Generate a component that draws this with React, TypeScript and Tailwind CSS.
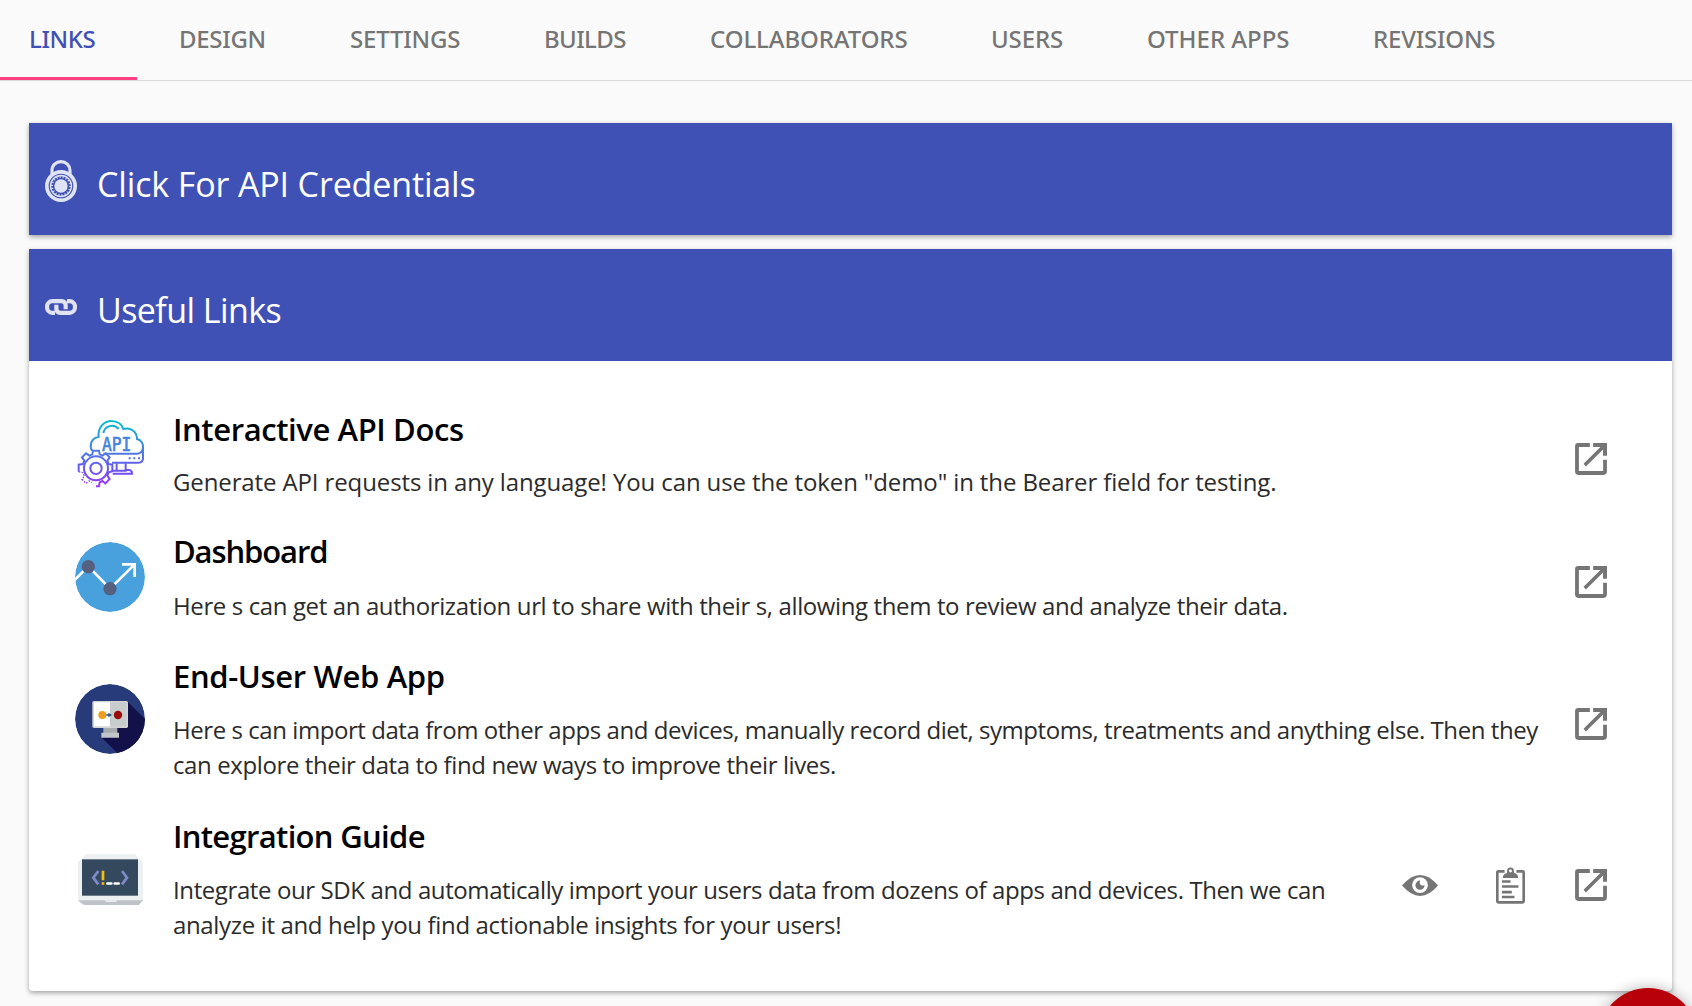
import React from "react";

const tabs = [
  { label: "LINKS", cls: "w-[137px] pl-[29px] text-[#3f51b5] border-b-3 border-[#ff4081] pt-[3px] tracking-[-0.4px]" },
  { label: "DESIGN", cls: "w-[171px] tracking-[-0.3px]" },
  { label: "SETTINGS", cls: "w-[194px] tracking-[-0.2px]" },
  { label: "BUILDS", cls: "w-[166px] tracking-[-0.6px]" },
  { label: "COLLABORATORS", cls: "w-[281px] tracking-[-0.1px]" },
  { label: "USERS", cls: "w-[156px] tracking-[-0.1px]" },
  { label: "OTHER APPS", cls: "w-[226px]" },
  { label: "REVISIONS", cls: "w-[206px] tracking-[-0.2px]" },
];

function LockIcon() {
  return (
    <svg viewBox="0 0 96 126" className="h-[42px] w-8" fill="none" stroke="#e0e3f3">
      <path d="M21 45V31A27 26 0 0 1 75 31V45" strokeWidth="9.500" />
      <circle cx="48" cy="78" r="42.500" strokeWidth="11" />
      <circle cx="48" cy="78" r="31.500" strokeWidth="4" />
      <circle cx="48" cy="78" r="27" strokeWidth="6" strokeDasharray="3 6.4" />
      <circle cx="48" cy="78" r="20" fill="#e0e3f3" stroke="none" />
    </svg>
  );
}

function ChainIcon() {
  return (
    <svg viewBox="0 0 96 48" className="h-4 w-8" fill="none" stroke="#e0e3f3" strokeWidth="12.500">
      <path d="M30 41.500H22A16 17.500 0 0 1 22 6.500H49Q62 7 62 19V31" />
      <path d="M66 6.500H74A16 17.500 0 0 1 74 41.500H47Q34 41 34 29V17" />
    </svg>
  );
}

function ApiIcon() {
  return (
    <svg viewBox="27 27 210 210" className="size-[70px]" fill="none" stroke="url(#apiGrad)" strokeWidth="6">
      <defs>
        <linearGradient id="apiGrad" gradientUnits="userSpaceOnUse" x1="0" y1="30" x2="0" y2="230">
          <stop offset="0" stopColor="#00c0d0" />
          <stop offset="0.450" stopColor="#4a7fe0" />
          <stop offset="0.750" stopColor="#6a55f0" />
          <stop offset="1" stopColor="#a035f5" />
        </linearGradient>
      </defs>
      <path d="M78 122C70 108 74 84 98 81C94 52 115 33 136 33C155 33 168 44 172 57C194 50 213 66 213 87C226 90 232 102 231 113V146Q230 158 218 158H138" />
      <path d="M112 131H214Q229 130 231 113M112 69C116 48 143 39 158 57" />
      <path d="M152 160V182H138M179 160V180H190Q198 181 198 191H140M152 182H182" />
      <path d="M188 145h6M202 145h6M216 145h6" />
      <circle cx="90" cy="175" r="17" />
      <circle cx="90" cy="175" r="36" />
      <path d="M38 185V164L51 162L55 152L48 142L60 130L70 137L79 133L81 122H99L101 133L110 137L119 130L131 142L124 152L128 162L139 164V184L128 187L124 197L131 207L118 220L109 213L101 217L99 229H90" />
      <path d="M38 185L51 188L55 198L48 208L60 220L69 213L78 217" strokeWidth="4" strokeDasharray="5 4" />
      <text x="108" y="122" textLength="88" lengthAdjust="spacingAndGlyphs" fill="#4583dc" stroke="#4583dc" strokeWidth="2" className="font-['DejaVu_Sans_Mono',monospace] text-[60px]">API</text>
    </svg>
  );
}

function DashboardIcon() {
  return (
    <svg viewBox="27 36 210 210" className="size-[70px]">
      <clipPath id="dashClip"><circle cx="132" cy="141" r="105" /></clipPath>
      <g clipPath="url(#dashClip)">
        <circle cx="132" cy="141" r="105" fill="#48a0dc" />
        <path d="M24 152L67 109L132 176L206 103M168 103H206V141" fill="none" stroke="#fff" strokeWidth="8" />
        <circle cx="67" cy="110" r="20" fill="#556080" />
        <circle cx="132" cy="176" r="20" fill="#556080" />
      </g>
    </svg>
  );
}

function WebAppIcon() {
  return (
    <svg viewBox="27 42 210 210" className="size-[70px]">
      <clipPath id="webClip"><circle cx="132" cy="147" r="105" /></clipPath>
      <g clipPath="url(#webClip)">
        <circle cx="132" cy="147" r="105" fill="#273b7a" />
        <path d="M185 95L260 170V260H165L106 202L150 172Z" fill="#121149" />
        <path d="M112 170H154V190H112Z" fill="#a9acae" />
        <path d="M106 188H159V203H106Z" fill="#c3c6c8" />
        <rect x="79" y="93" width="107" height="81" rx="5" fill="#d3d5d6" />
        <path d="M84 97H132V169H84Z" fill="#fff" />
        <path d="M132 97H181V169H132Z" fill="#c9cccd" />
        <path d="M110 135H134" stroke="#2d5788" strokeWidth="5" />
        <path d="M127 128L138 135L127 142Z" fill="#2d5788" />
        <circle cx="109" cy="135" r="12" fill="#ee9d22" />
        <circle cx="156" cy="135" r="12.500" fill="#970b0b" />
      </g>
    </svg>
  );
}

function GuideIcon() {
  return (
    <svg viewBox="27 12 210 210" className="size-[70px]" fill="none">
      <path d="M60 43H207L231 67V183H36V67Z" fill="#ecf0f1" />
      <path d="M36 181H231L218 195H62Q52 195 48 191Z" fill="#bdc3c7" />
      <path d="M116 181H154Q152 186 147 186H123Q118 186 116 181Z" fill="#ecf0f1" />
      <rect x="48" y="58" width="168" height="109" fill="#35495e" />
      <path d="M97 93L82 113L97 133M168 93L183 113L168 133" stroke="#7f8bc9" strokeWidth="8" />
      <path d="M111 92V121M111 127V134" stroke="#f3c010" strokeWidth="8" />
      <path d="M124 130.500H136M146 130.500H158" stroke="#fff" strokeWidth="8" strokeLinecap="round" />
    </svg>
  );
}

function OpenIcon() {
  return (
    <svg viewBox="0 0 97 97" className="size-8" fill="none" stroke="#757575">
      <path d="M45 6H10Q6 6 6 10V86Q6 91 10 91H86Q91 91 91 86V51" strokeWidth="11.500" />
      <path d="M55 0H97V39H85V20L33 71L26 63L77 12H55Z" fill="#757575" stroke="none" />
    </svg>
  );
}

function EyeIcon() {
  return (
    <svg viewBox="0 0 110 64" className="h-[21px] w-9">
      <path d="M0 32Q28 0 55 0Q83 0 110 32Q83 64 55 64Q28 64 0 32Z" fill="#757575" />
      <circle cx="55" cy="31" r="24" fill="#fff" />
      <path d="M55 17A14 14 0 1 0 69 31Q60 34 56 29Q53 24 55 17Z" fill="#757575" />
    </svg>
  );
}

function ClipboardIcon() {
  return (
    <svg viewBox="0 0 88 110" className="h-[37px] w-[29px]" fill="none" stroke="#757575">
      <path d="M26 12H7Q4 12 4 15V103Q4 106 7 106H81Q84 106 84 103V15Q84 12 81 12H62" strokeWidth="8" />
      <path d="M21 32Q21 20 32 18Q34 17 34 10A10 10 0 0 1 54 10Q54 17 57 18Q67 20 67 32Z" fill="#757575" stroke="none" />
      <circle cx="44" cy="11" r="4.500" fill="#fff" stroke="none" />
      <path d="M18 43H44M18 58H68M18 75H48M18 90H56" strokeWidth="8" />
    </svg>
  );
}

const links = [
  {
    title: "Interactive API Docs", rowCls: "mb-8", titleCls: "tracking-[-0.4px] mb-[15px]", icon: <ApiIcon />,
    lines: [{ text: 'Generate API requests in any language! You can use the token "demo" in the Bearer field for testing.', cls: "tracking-[-0.117px]" }],
  },
  {
    title: "Dashboard", rowCls: "mb-[33px]", titleCls: "tracking-[-1.1px] mb-[17px]", icon: <DashboardIcon />,
    lines: [{ text: "Here s can get an authorization url to share with their s, allowing them to review and analyze their data.", cls: "tracking-[-0.38px]" }],
  },
  {
    title: "End-User Web App", rowCls: "mb-[34px]", titleCls: "tracking-[-0.35px] mb-4", icon: <WebAppIcon />,
    lines: [
      { text: "Here s can import data from other apps and devices, manually record diet, symptoms, treatments and anything else. Then they", cls: "tracking-[-0.44px]" },
      { text: "can explore their data to find new ways to improve their lives.", cls: "tracking-[-0.39px]" },
    ],
  },
  {
    title: "Integration Guide", rowCls: "", titleCls: "tracking-[-0.68px] mb-4", icon: <GuideIcon />, extra: true,
    lines: [
      { text: "Integrate our SDK and automatically import your users data from dozens of apps and devices. Then we can", cls: "tracking-[-0.395px]" },
      { text: "analyze it and help you find actionable insights for your users!", cls: "tracking-[-0.345px]" },
    ],
  },
];

function CardHeader({ icon, title, cls }: { icon: React.ReactNode; title: string; cls: string }) {
  return (
    <header className="flex h-28 items-center gap-5 bg-[#3f51b5] pt-1 pl-4">
      {icon}
      <h2 className={"pt-[6px] text-[34px] leading-10 text-white " + cls}>{title}</h2>
    </header>
  );
}

export default function App() {
  return (
    <div className="relative h-[1006px] overflow-hidden bg-[#fafafa] font-['Open_Sans',sans-serif]">
      <nav className="flex h-[81px] border-b border-[#dadada] font-['Noto_Sans',sans-serif] text-2xl font-medium text-[#757575]">
        {tabs.map((t, i) => (
          <button key={t.label} className={"flex h-20 items-center text-left whitespace-nowrap " + (i ? "pl-[42px] " : "") + t.cls}>
            <span className="pb-[2px]">{t.label}</span>
          </button>
        ))}
      </nav>
      <main className="mt-[42px] mr-5 ml-[29px] flex flex-col gap-[14px]">
        <section className="shadow-[0_2px_5px_rgba(0,0,0,0.35)]">
          <CardHeader icon={<LockIcon />} title="Click For API Credentials" cls="tracking-[-0.14px]" />
        </section>
        <section className="h-[742px] rounded-b bg-white shadow-[0_2px_5px_rgba(0,0,0,0.35)]">
          <CardHeader icon={<ChainIcon />} title="Useful Links" cls="tracking-[-0.57px]" />
          <ul className="flex flex-col pt-12 pr-[65px] pl-[46px]">
            {links.map((l) => (
              <li key={l.title} className={"flex items-center " + l.rowCls}>
                {l.icon}
                <div className="ml-7 flex-1">
                  <h3 className={"text-[31px] leading-10 font-semibold text-black " + l.titleCls}>{l.title}</h3>
                  <p className="text-2xl leading-[35px] whitespace-nowrap text-[#2b2b2b]">
                    {l.lines.map((s) => (
                      <span key={s.text} className={"block " + s.cls}>{s.text}</span>
                    ))}
                  </p>
                </div>
                <div className={l.extra ? "flex items-center pt-[11px]" : "flex items-center pt-[9px]"}>
                  {l.extra && (
                    <>
                      <button className="mr-[58px] pt-px"><EyeIcon /></button>
                      <button className="mr-[50px] pt-px"><ClipboardIcon /></button>
                    </>
                  )}
                  <button><OpenIcon /></button>
                </div>
              </li>
            ))}
          </ul>
        </section>
      </main>
      <button aria-label="Help" className="absolute top-[988px] left-[1599px] size-[98px] rounded-full bg-[#b8000b] shadow-[0_0_14px_rgba(0,0,0,0.3)]" />
    </div>
  );
}
